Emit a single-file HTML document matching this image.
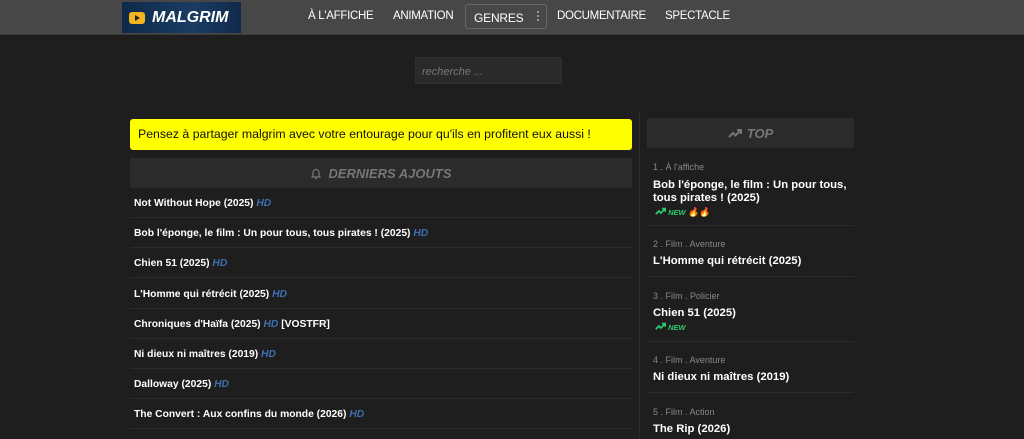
<!DOCTYPE html>
<html><head><meta charset="utf-8"><style>
*{margin:0;padding:0;box-sizing:border-box}
body{width:1024px;height:439px;overflow:hidden;background:#1e1e1e;font-family:"Liberation Sans",Arial,sans-serif;color:#fff;position:relative}
.nav{position:absolute;left:0;top:0;width:1024px;height:35px;background:#474747;border-bottom:1px solid #3a3a3a}
.logo{position:absolute;left:122px;top:2px;width:119px;height:31px;background:linear-gradient(90deg,#0e2a4a,#1a3c63 60%,#10294a)}
.logo .ic{position:absolute;left:7px;top:10px;width:16px;height:12px;background:#f3b51d;border-radius:3px}
.logo .ic:after{content:"";position:absolute;left:6px;top:3px;border-left:5px solid #222;border-top:3px solid transparent;border-bottom:3px solid transparent}
.logo .t{position:absolute;left:30px;top:7px;font-size:16px;font-weight:bold;font-style:italic;color:#fff}
.nav a{position:absolute;top:10px;font-size:11.5px;color:#fff;text-decoration:none;letter-spacing:-0.3px}
.genres{position:absolute;left:465px;top:4px;width:82px;height:25px;border:1px solid #666;border-radius:3px}
.genres span{position:absolute;left:8px;top:6px;font-size:12px;letter-spacing:-0.2px}
.genres i{position:absolute;left:71px;top:6px;width:2px;height:2px;background:#999;box-shadow:0 4px #999,0 8px #999}
.search{position:absolute;left:415px;top:57px;width:147px;height:27px;background:#2a2a2a;border:1px solid #303030;border-radius:2px;font-size:11px;font-style:italic;color:#777;padding:8px 6px}
.yellow{position:absolute;left:130px;top:119px;width:502px;height:31px;background:#ffff00;border-radius:3px;color:#111;font-size:12.3px;padding:8px 8px}
.hdr{position:absolute;background:#2b2b2b;color:#777;font-weight:bold;font-style:italic;font-size:13px;text-align:center}
.row{position:absolute;left:130px;width:502px;height:30px;border-bottom:1px solid #2c2c2c;font-size:10.3px;font-weight:bold;padding:10px 4px}
.row b{color:#3d6fb0;font-style:italic}
.vd{position:absolute;left:639px;top:110px;width:1px;height:329px;background:#2a2a2a}
.cat{position:absolute;font-size:9px;color:#888;left:653px}
.tt{position:absolute;font-size:11.3px;font-weight:bold;left:653px;line-height:13px;width:200px}
.new{position:absolute;left:655px;font-size:7.5px;color:#2ecc71;font-style:italic;font-weight:bold}
.sep{position:absolute;left:647px;width:207px;height:1px;background:#2c2c2c}
</style></head><body>
<div class="nav">
<div class="logo"><div class="ic"></div><div class="t">MALGRIM</div></div>
<a style="left:308px">À L'AFFICHE</a>
<a style="left:393px">ANIMATION</a>
<div class="genres"><span>GENRES</span><i></i></div>
<a style="left:557px">DOCUMENTAIRE</a>
<a style="left:665px">SPECTACLE</a>
</div>
<div class="search">recherche ...</div>
<div class="yellow">Pensez à partager malgrim avec votre entourage pour qu'ils en profitent eux aussi !</div>
<div class="hdr" style="left:130px;top:158px;width:502px;height:30px;padding-top:8px"><svg width="12" height="13" viewBox="0 0 12 13" style="vertical-align:-2px;margin-right:6px"><path d="M3 9V5.5a3 3 0 0 1 6 0V9l1 1H2z M5 11.5h2" fill="none" stroke="#777" stroke-width="1.2"/></svg>DERNIERS AJOUTS</div>
<div class="row" style="top:188px">Not Without Hope (2025) <b>HD</b></div>
<div class="row" style="top:218px">Bob l'éponge, le film : Un pour tous, tous pirates ! (2025) <b>HD</b></div>
<div class="row" style="top:248px">Chien 51 (2025) <b>HD</b></div>
<div class="row" style="top:279px">L'Homme qui rétrécit (2025) <b>HD</b></div>
<div class="row" style="top:309px">Chroniques d'Haïfa (2025) <b>HD</b> [VOSTFR]</div>
<div class="row" style="top:339px">Ni dieux ni maîtres (2019) <b>HD</b></div>
<div class="row" style="top:369px">Dalloway (2025) <b>HD</b></div>
<div class="row" style="top:399px">The Convert : Aux confins du monde (2026) <b>HD</b></div>
<div class="vd"></div>
<div class="hdr" style="left:647px;top:118px;width:207px;height:30px;padding-top:8px"><svg width="14" height="10" viewBox="0 0 14 10" style="margin-right:5px"><path d="M1 9l4-4 2.5 2.5L12 3M9 2h4v4" fill="none" stroke="#777" stroke-width="2"/></svg>TOP</div>
<div class="cat" style="top:162px">1 . À l'affiche</div>
<div class="tt" style="top:179px">Bob l'éponge, le film : Un pour tous, tous pirates ! (2025)</div>
<div class="new" style="top:207px"><svg width="11" height="8" viewBox="0 0 14 10"><path d="M1 9l4-4 2.5 2.5L12 3M9 2h4v4" fill="none" stroke="#2ecc71" stroke-width="2.2"/></svg> NEW <span style="font-size:9px">🔥🔥</span></div>
<div class="sep" style="top:225px"></div>
<div class="cat" style="top:239px">2 . Film . Aventure</div>
<div class="tt" style="top:255px">L'Homme qui rétrécit (2025)</div>
<div class="sep" style="top:276px"></div>
<div class="cat" style="top:291px">3 . Film . Policier</div>
<div class="tt" style="top:307px">Chien 51 (2025)</div>
<div class="new" style="top:322px"><svg width="11" height="8" viewBox="0 0 14 10"><path d="M1 9l4-4 2.5 2.5L12 3M9 2h4v4" fill="none" stroke="#2ecc71" stroke-width="2.2"/></svg> NEW</div>
<div class="sep" style="top:341px"></div>
<div class="cat" style="top:355px">4 . Film . Aventure</div>
<div class="tt" style="top:371px">Ni dieux ni maîtres (2019)</div>
<div class="sep" style="top:392px"></div>
<div class="cat" style="top:407px">5 . Film . Action</div>
<div class="tt" style="top:423px">The Rip (2026)</div>
</body></html>
